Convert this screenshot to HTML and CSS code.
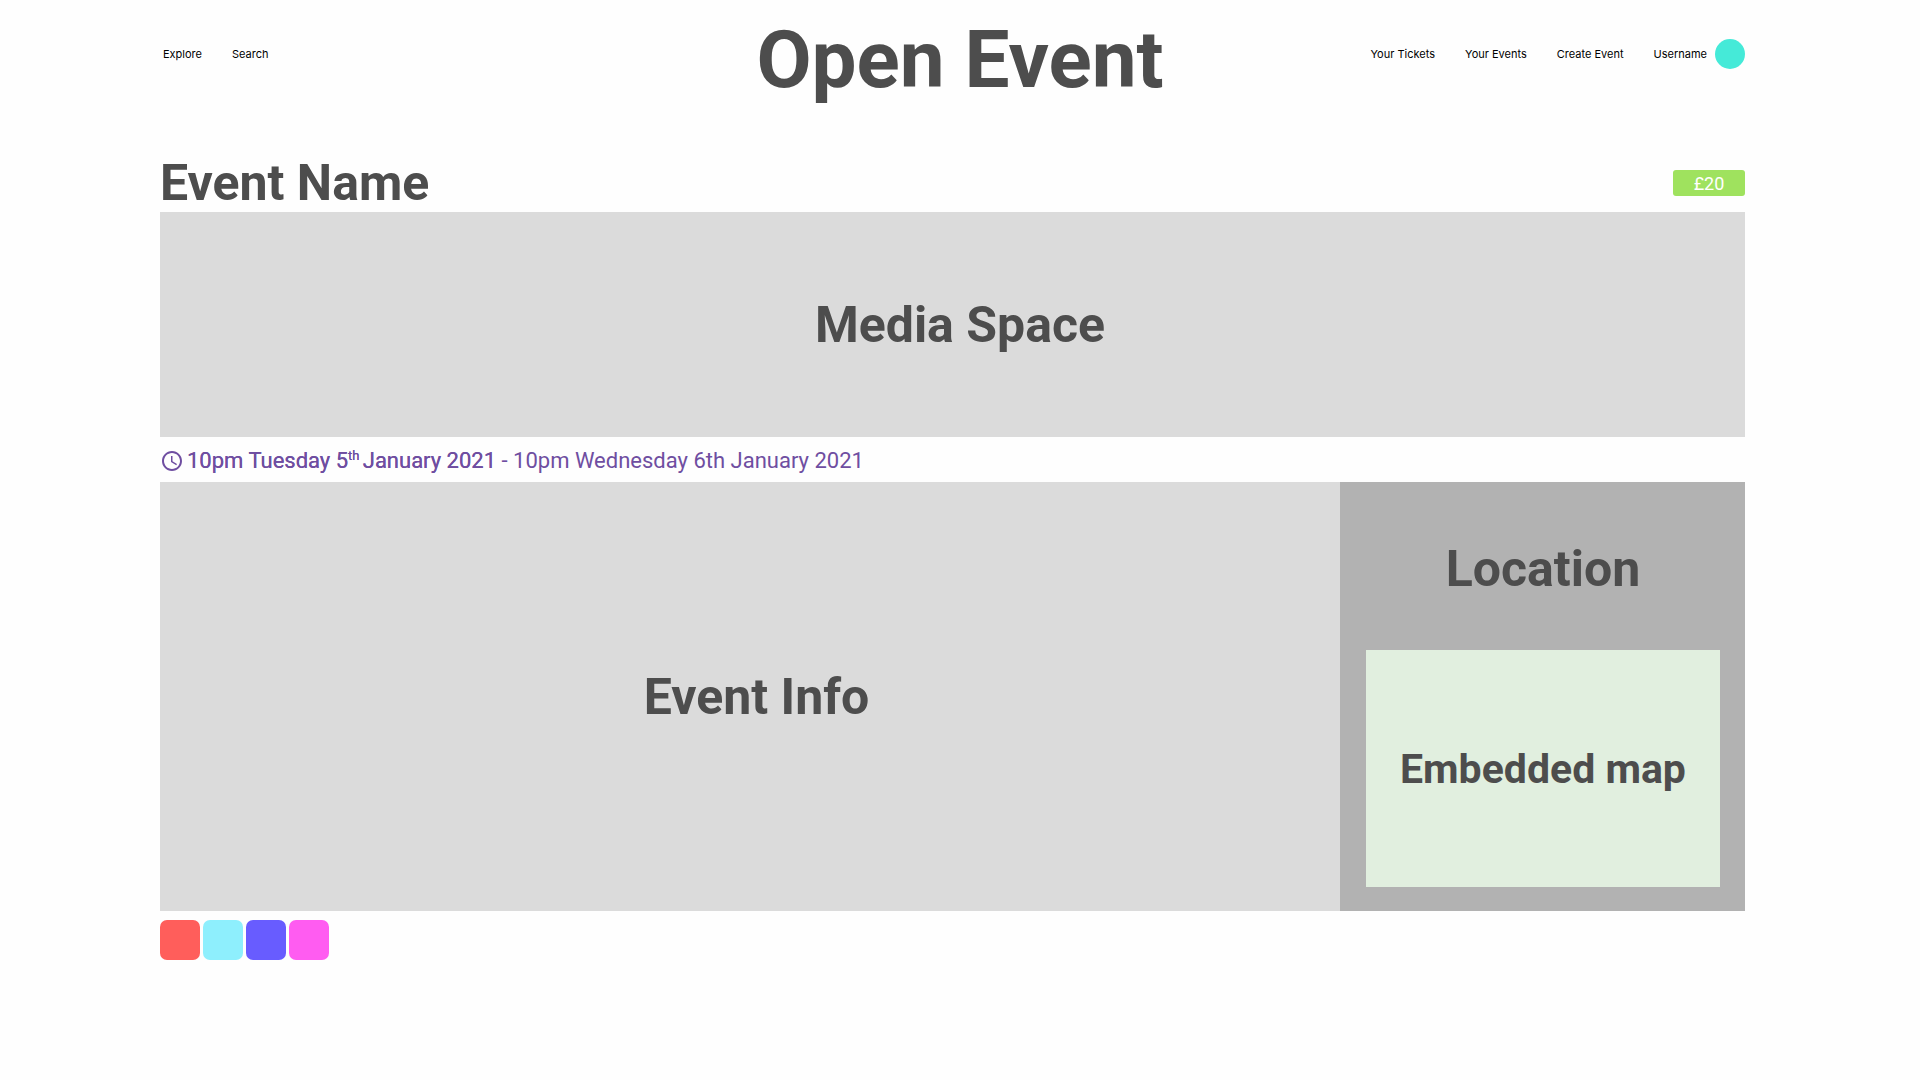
FILE: index.html
```html
<!DOCTYPE html>
<html lang="en">
<head>
  <meta charset="utf-8">
  <meta name="viewport" content="width=device-width, initial-scale=1">
  <title>Open Event</title>
  <link rel="stylesheet" href="styles.css">
</head>
<body>
  <header class="site-header">
    <nav class="nav" aria-label="Browse">
      <a href="#">Explore</a>
      <a href="#">Search</a>
    </nav>
    <p class="brand">Open Event</p>
    <nav class="nav nav-account" aria-label="Account">
      <a href="#">Your Tickets</a>
      <a href="#">Your Events</a>
      <a href="#">Create Event</a>
      <a class="profile" href="#">Username <span class="avatar"></span></a>
    </nav>
  </header>

  <main class="event">
    <div class="event-head">
      <h1 class="heading">Event Name</h1>
      <button class="price" type="button">£20</button>
    </div>

    <section class="media">
      <h2 class="heading">Media Space</h2>
    </section>

    <p class="dates">
      <svg class="clock" viewBox="0 0 24 24" aria-hidden="true">
        <path fill="currentColor" d="M11.99 2C6.47 2 2 6.48 2 12s4.47 10 9.99 10C17.52 22 22 17.52 22 12S17.52 2 11.99 2zM12 20c-4.42 0-8-3.58-8-8s3.58-8 8-8 8 3.58 8 8-3.58 8-8 8zm.5-13H11v6l5.25 3.15.75-1.23-4.5-2.67z"/>
      </svg>
      <span><span class="start">10pm Tuesday 5<sup>th </sup>January 2021</span> - 10pm Wednesday 6th January 2021</span>
    </p>

    <div class="details">
      <section class="info">
        <h2 class="heading">Event Info</h2>
      </section>
      <aside class="location">
        <h2 class="heading">Location</h2>
        <div class="map">
          <h3 class="map-title">Embedded map</h3>
        </div>
      </aside>
    </div>

    <div class="swatches">
      <button class="swatch swatch-red" type="button" aria-label="Red"></button>
      <button class="swatch swatch-cyan" type="button" aria-label="Cyan"></button>
      <button class="swatch swatch-indigo" type="button" aria-label="Indigo"></button>
      <button class="swatch swatch-pink" type="button" aria-label="Pink"></button>
    </div>
  </main>
</body>
</html>
```

FILE: styles.css
```css
* {
  box-sizing: border-box;
}

body {
  margin: 0;
  background: #fefefe;
  color: #4d4d4d;
  font-family: Roboto, "Liberation Sans", sans-serif;
}

h1, h2, h3, p {
  margin: 0;
}

button {
  border: 0;
  padding: 0;
  font: inherit;
}

.site-header {
  display: grid;
  grid-template-columns: 1fr auto 1fr;
  align-items: center;
  min-height: 108px;
  padding: 0 160px;
}

.brand {
  padding-top: 12px;
  font-size: 80px;
  line-height: 96px;
  font-weight: 700;
}

.nav {
  display: flex;
  align-items: center;
  gap: 30px;
  padding-left: 3px;
  font-family: Inter, "Liberation Sans", sans-serif;
  font-size: 11px;
  line-height: 16px;
}

.nav a {
  color: #000;
  text-decoration: none;
}

.nav-account {
  justify-content: flex-end;
  padding: 0 15px 0 0;
}

.nav .profile {
  display: flex;
  align-items: center;
  gap: 8px;
}

.avatar {
  width: 30px;
  height: 30px;
  border-radius: 50%;
  background: #45ead8;
}

.event {
  padding: 46px 175px 0 160px;
}

.event-head {
  display: flex;
  align-items: center;
  justify-content: space-between;
  min-height: 58px;
}

.heading {
  font-size: 50px;
  line-height: 58px;
  font-weight: 700;
}

.price {
  width: 72px;
  height: 26px;
  padding-top: 2px;
  border-radius: 3px;
  background: #9fe25e;
  color: #fff;
  font-size: 18px;
  line-height: 24px;
}

.media {
  display: flex;
  align-items: center;
  justify-content: center;
  min-height: 225px;
  padding-left: 15px;
  background: #dbdbdb;
}

.dates {
  display: flex;
  align-items: center;
  gap: 3px;
  min-height: 45px;
  padding-top: 2px;
  color: #6f4ea1;
  font-size: 22px;
  line-height: 26px;
}

.clock {
  width: 24px;
  height: 24px;
}

.start {
  text-shadow: 0 0 0 currentColor;
}

.start sup {
  font-size: 13px;
  line-height: 0;
}

.details {
  display: grid;
  grid-template-columns: 1fr 405px;
  min-height: 429px;
}

.info {
  display: flex;
  align-items: center;
  justify-content: center;
  padding-left: 13px;
  background: #dbdbdb;
}

.location {
  display: flex;
  flex-direction: column;
  padding: 58px 25px 24px 26px;
  background: #b2b2b2;
  text-align: center;
}

.map {
  display: flex;
  flex: 1;
  align-items: center;
  justify-content: center;
  margin-top: 52px;
  background: #e1efdf;
}

.map-title {
  font-size: 41px;
  line-height: 48px;
  font-weight: 700;
}

.swatches {
  display: flex;
  gap: 3px;
  padding: 9px 0;
}

.swatch {
  width: 40px;
  height: 40px;
  border-radius: 7px;
}

.swatch-red {
  background: #ff5e5b;
}

.swatch-cyan {
  background: #8eeffd;
}

.swatch-indigo {
  background: #685cff;
}

.swatch-pink {
  background: #ff5cf1;
}
```
